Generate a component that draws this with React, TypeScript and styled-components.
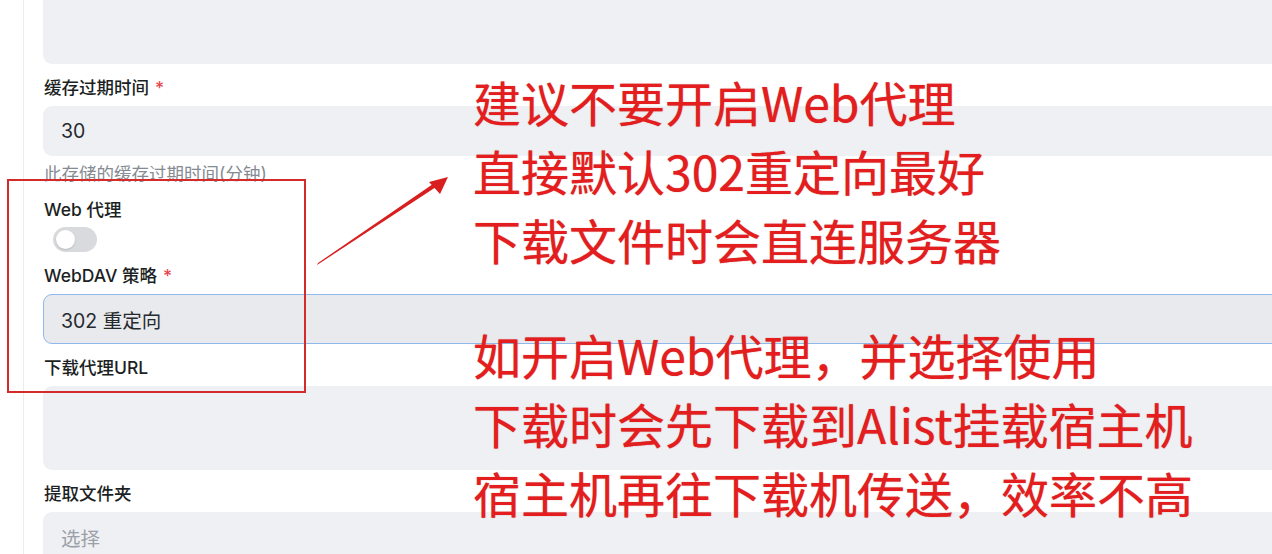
import React from "react";
import styled, { createGlobalStyle } from "styled-components";

const Global = createGlobalStyle`
  html, body { margin: 0; padding: 0; background: #ffffff; overflow: hidden; }
  body { font-family: Inter, "Noto Sans CJK SC", "Noto Sans", sans-serif; color: #1f2328; }
  * { box-sizing: border-box; }
`;

const Page = styled.div`
  position: relative;
  width: 1272px;
  height: 554px;
  overflow: hidden;
  background: #ffffff;
`;

const Card = styled.div`
  margin-left: 23px;
  width: 1420px;
  min-height: 620px;
  border-left: 1px solid #ececef;
  padding-left: 19px;
`;

const Form = styled.div`
  display: flex;
  flex-direction: column;
  gap: 12px;
  margin-top: -20px;
`;

const Field = styled.div<{ $tight?: boolean }>`
  display: flex;
  flex-direction: column;
  gap: ${(p) => (p.$tight ? "5px" : "6px")};
`;

const Label = styled.div`
  font-size: 17.5px;
  line-height: 24px;
  font-weight: 500;
  color: #1c1f24;
  padding-left: 1px;
  font-family: Inter, "Noto Sans CJK SC", sans-serif;
`;

const Req = styled.span`
  color: #e5484d;
  margin-left: 6px;
`;

const Control = styled.div<{ $focused?: boolean; $tall?: boolean; $placeholder?: boolean }>`
  height: ${(p) => (p.$tall ? "84px" : "50px")};
  border-radius: 9px;
  background: ${(p) => (p.$focused ? "#e9eaed" : "#eff0f3")};
  border: 1px solid ${(p) => (p.$focused ? "#8fb9ea" : "transparent")};
  display: flex;
  align-items: ${(p) => (p.$tall ? "flex-start" : "center")};
  padding: 0 17px;
  font-size: 19.5px;
  color: ${(p) => (p.$placeholder ? "#9ba0a8" : "#26292e")};
  font-family: Inter, "Noto Sans CJK SC", sans-serif;
`;

const Help = styled.div`
  font-size: 17.5px;
  line-height: 24px;
  color: #868b93;
  padding-left: 1px;
`;

const SwitchTrack = styled.div`
  margin-left: 10px;
  width: 44px;
  height: 25px;
  border-radius: 13px;
  background: #d9dadd;
  display: flex;
  align-items: center;
  padding: 0 3px;
`;

const SwitchKnob = styled.div`
  width: 19px;
  height: 19px;
  border-radius: 50%;
  background: #ffffff;
  box-shadow: 0 1px 2px rgba(0, 0, 0, 0.15);
`;

const RedBox = styled.div`
  position: absolute;
  left: 7px;
  top: 179px;
  width: 299px;
  height: 214px;
  border: 2px solid #d42a2a;
`;

const ArrowSvg = styled.svg`
  position: absolute;
  left: 0;
  top: 0;
  pointer-events: none;
`;

const Notes = styled.div`
  position: absolute;
  left: 473px;
  top: 67px;
  display: flex;
  flex-direction: column;
  gap: 46px;
`;

const NoteBlock = styled.div`
  display: flex;
  flex-direction: column;
`;

const NoteLine = styled.div`
  font-family: "Noto Sans CJK SC", sans-serif;
  font-size: 48px;
  line-height: 69px;
  font-weight: 400;
  color: #e41e1e;
  white-space: nowrap;
  text-shadow: 0 0 1px rgba(160, 0, 0, 0.6);
`;

export default function App() {
  return (
    <Page>
      <Global />
      <Card>
        <Form>
          <Field>
            <Control $tall />
          </Field>
          <Field>
            <Label>
              缓存过期时间<Req>*</Req>
            </Label>
            <Control>30</Control>
            <Help>此存储的缓存过期时间(分钟)</Help>
          </Field>
          <Field $tight>
            <Label>Web 代理</Label>
            <SwitchTrack>
              <SwitchKnob />
            </SwitchTrack>
          </Field>
          <Field>
            <Label>
              WebDAV 策略<Req>*</Req>
            </Label>
            <Control $focused>302 重定向</Control>
          </Field>
          <Field>
            <Label>下载代理URL</Label>
            <Control $tall />
          </Field>
          <Field>
            <Label>提取文件夹</Label>
            <Control $placeholder>选择</Control>
          </Field>
        </Form>
      </Card>

      <RedBox />
      <ArrowSvg width="1272" height="554" viewBox="0 0 1272 554">
        <polygon points="317,265 436,187 433,184 318,263" fill="#d81e1e" />
        <polygon points="448,177 429,182 440,194" fill="#d81e1e" />
      </ArrowSvg>

      <Notes>
        <NoteBlock>
          <NoteLine>建议不要开启Web代理</NoteLine>
          <NoteLine>直接默认302重定向最好</NoteLine>
          <NoteLine>下载文件时会直连服务器</NoteLine>
        </NoteBlock>
        <NoteBlock>
          <NoteLine>如开启Web代理，并选择使用</NoteLine>
          <NoteLine>下载时会先下载到Alist挂载宿主机</NoteLine>
          <NoteLine>宿主机再往下载机传送，效率不高</NoteLine>
        </NoteBlock>
      </Notes>
    </Page>
  );
}
